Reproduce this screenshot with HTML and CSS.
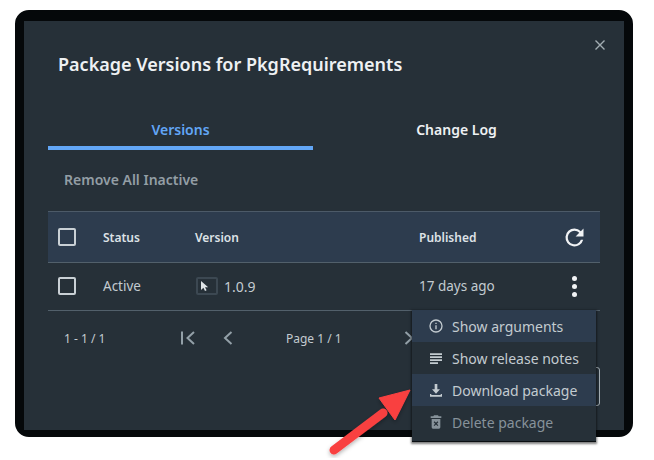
FILE: index.html
```html
<!DOCTYPE html>
<html lang="en">
<head>
  <meta charset="UTF-8">
  <title>Package Versions</title>
  <link rel="stylesheet" href="styles.css">
</head>
<body>

  <div class="frame">
    <div class="dialog">
      <button class="close" aria-label="Close">
        <svg width="10" height="10" viewBox="0 0 10 10"><path d="M0.5 0.5L9.5 9.5M9.5 0.5L0.5 9.5" stroke="currentColor" stroke-width="1.4" fill="none"/></svg>
      </button>
      <h1 class="title">Package Versions for PkgRequirements</h1>

      <div class="tabs">
        <div class="tab tab-active">Versions</div>
        <div class="tab tab-other">Change Log</div>
      </div>

      <div class="remove-all">Remove All Inactive</div>

      <div class="table">
        <div class="row row-head">
          <span class="check"></span>
          <span class="col-status">Status</span>
          <span class="col-version">Version</span>
          <span class="col-published">Published</span>
          <svg class="refresh" width="27" height="27" viewBox="0 0 24 24"><path fill="currentColor" d="M17.65 6.35A7.96 7.96 0 0 0 12 4a8 8 0 1 0 7.73 10h-2.08A6 6 0 1 1 12 6c1.66 0 3.14.69 4.22 1.78L13 11h7V4l-2.35 2.35z"/></svg>
        </div>
        <div class="row row-body">
          <span class="check"></span>
          <span class="col-status">Active</span>
          <span class="col-version version-cell">
            <span class="thumb">
              <svg width="10" height="12" viewBox="0 0 10 12"><path fill="#dfe4e7" d="M1 1v9l2.4-2.2L5 11l1.6-.8L5 7.2h3.2z"/></svg>
            </span>
            1.0.9
          </span>
          <span class="col-published">17 days ago</span>
          <span class="dots"><i></i><i></i><i></i></span>
        </div>
      </div>

      <div class="pager">
        <span class="pager-count">1 - 1 / 1</span>
        <svg class="pager-first" width="18" height="16" viewBox="0 0 18 16"><path d="M2 1.500v13M14 2L7.500 8l6.500 6" stroke="currentColor" stroke-width="2" fill="none"/></svg>
        <svg class="pager-prev" width="10" height="16" viewBox="0 0 10 16"><path d="M8.500 2L2 8l6.500 6" stroke="currentColor" stroke-width="2" fill="none"/></svg>
        <span class="pager-page">Page 1 / 1</span>
        <svg class="pager-next" width="10" height="16" viewBox="0 0 10 16"><path d="M1.500 2L8 8l-6.500 6" stroke="currentColor" stroke-width="2" fill="none"/></svg>
      </div>

      <div class="footer">
        <button class="footer-btn" aria-label="Close"></button>
      </div>
    </div>
  </div>

  <div class="menu">
    <div class="menu-item menu-hover">
      <svg width="16" height="16" viewBox="0 0 24 24"><path fill="currentColor" d="M11 7h2v2h-2zm0 4h2v6h-2zm1-9a10 10 0 1 0 0 20 10 10 0 0 0 0-20zm0 18a8 8 0 1 1 0-16 8 8 0 0 1 0 16z"/></svg>
      Show arguments
    </div>
    <div class="menu-item">
      <svg width="16" height="16" viewBox="0 0 24 24"><path fill="currentColor" d="M3 5h18v2.500H3zm0 4.500h18V12H3zM3 14h18v2.500H3zm0 4.500h12V21H3z"/></svg>
      Show release notes
    </div>
    <div class="menu-item menu-hover">
      <svg width="16" height="16" viewBox="0 0 24 24"><path fill="currentColor" d="M10 3h4v8h4l-6 6.500L6 11h4zM3 18h2v1.500h14V18h2v4H3z"/></svg>
      Download package
    </div>
    <div class="menu-item menu-disabled">
      <svg width="16" height="16" viewBox="0 0 24 24"><path fill="currentColor" fill-rule="evenodd" d="M9 2h6l1 1.500h4V6H4V3.500h4zM5.500 7.500h13V20a2 2 0 0 1-2 2h-9a2 2 0 0 1-2-2zM9.800 11l-1.300 1.300 2.200 2.200-2.200 2.200 1.300 1.300 2.200-2.200 2.200 2.200 1.300-1.300-2.200-2.200 2.200-2.200-1.300-1.300-2.200 2.200z"/></svg>
      Delete package
    </div>
  </div>

  <svg class="arrow" width="100" height="80" viewBox="0 0 100 80">
    <defs>
      <filter id="arrow-shadow" x="-20%" y="-20%" width="140%" height="140%">
        <feDropShadow dx="0" dy="2" stdDeviation="2" flood-color="#000" flood-opacity="0.3"/>
      </filter>
    </defs>
    <g filter="url(#arrow-shadow)">
      <path d="M13 72L62 35" stroke="#f94141" stroke-width="9" stroke-linecap="round" fill="none"/>
      <path d="M89 12L58 20L74 42z" fill="#f94141" stroke="#f94141" stroke-width="1" stroke-linejoin="round"/>
    </g>
  </svg>

</body>
</html>
```

FILE: styles.css
```css
body {
  margin: 0;
  width: 654px;
  height: 460px;
  position: relative;
  overflow: hidden;
  background: #fff;
  font-family: 'Noto Sans', sans-serif;
  color: #c9d0d5;
}

.frame {
  width: 600px;
  margin: 10px 0 0 15px;
  background: #263038;
  border-style: solid;
  border-color: #05080a;
  border-width: 11px 9px 7px 9px;
  border-radius: 14px;
}

.dialog {
  position: relative;
  height: 409px;
  background: #263038;
  padding: 0 24px;
  box-sizing: border-box;
}

.close {
  position: absolute;
  top: 19px;
  right: 19px;
  padding: 0;
  display: flex;
  background: none;
  border: none;
  color: #a3adb3;
}

.title {
  margin: 0;
  padding: 31px 0 0 10px;
  font-size: 18px;
  line-height: 25px;
  font-weight: 600;
  color: #eef1f3;
}

.tabs {
  display: flex;
  margin-top: 39px;
  height: 34px;
  font-size: 14px;
  font-weight: 600;
  line-height: 20px;
  text-align: center;
}

.tab {
  padding-top: 4px;
  box-sizing: border-box;
}

.tab-active {
  width: 265px;
  color: #62a6f6;
  border-bottom: 4px solid #62a6f6;
}

.tab-other {
  width: 287px;
  color: #eef1f3;
}

.remove-all {
  margin: 20px 0 0 16px;
  font-size: 14px;
  line-height: 20px;
  font-weight: 600;
  color: #939ea5;
}

.table {
  margin-top: 21px;
  font-size: 13.5px;
}

.row {
  display: flex;
  align-items: center;
  padding-left: 10px;
  box-sizing: border-box;
  border-bottom: 1px solid #52606b;
}

.row-head {
  height: 52px;
  background: #2d3c4e;
  border-top: 1px solid #4c5a68;
  font-size: 12px;
  font-weight: 600;
  color: #dde2e6;
}

.row-body {
  height: 48px;
  padding-bottom: 1px;
  color: #c3cbd0;
}

.check {
  width: 18px;
  height: 18px;
  box-sizing: border-box;
  border: 2px solid #c9d0d5;
  border-radius: 2px;
}

.col-status {
  width: 92px;
  margin-left: 27px;
}

.col-version {
  width: 224px;
}

.col-published {
  width: 133px;
}

.version-cell {
  display: flex;
  align-items: center;
  gap: 6px;
  font-size: 14px;
}

.thumb {
  width: 22px;
  height: 18px;
  margin-left: 1px;
  display: flex;
  align-items: center;
  padding-left: 2px;
  box-sizing: border-box;
  border: 2px solid #3c4852;
  border-radius: 2px;
}

.refresh {
  color: #f1f3f5;
  margin-left: 9px;
}

.dots {
  display: flex;
  flex-direction: column;
  gap: 3px;
  margin-left: 20px;
}

.dots i {
  width: 5px;
  height: 5px;
  border-radius: 50%;
  background: #f1f3f5;
}

.pager {
  display: flex;
  align-items: center;
  height: 54px;
  color: #93a0a8;
  font-size: 12px;
}

.pager-count {
  width: 116px;
  margin-left: 16px;
  color: #c3cbd0;
}

.pager-page {
  width: 118px;
  margin-left: 53px;
  color: #c3cbd0;
}

.pager-prev {
  margin-left: 25px;
}

.footer {
  display: flex;
  justify-content: flex-end;
  padding-top: 2px;
}

.footer-btn {
  width: 100px;
  height: 39px;
  background: none;
  border: 1px solid #a3adb3;
  border-radius: 3px;
}

.menu {
  position: absolute;
  top: 310px;
  left: 412px;
  width: 184px;
  background: #263038;
  border-bottom: 1px solid #0b0f12;
  padding-bottom: 3px;
  box-shadow: 0 1px 2px 1px rgba(0, 0, 0, 0.5);
  font-size: 14px;
  color: #c3cbd0;
}

.menu-item {
  display: flex;
  align-items: center;
  gap: 8px;
  height: 32px;
  padding-left: 16px;
}

.menu-hover {
  background: #2d3c4e;
}

.menu-disabled {
  color: #87929a;
}

.arrow {
  position: absolute;
  left: 321px;
  top: 378px;
}
```
